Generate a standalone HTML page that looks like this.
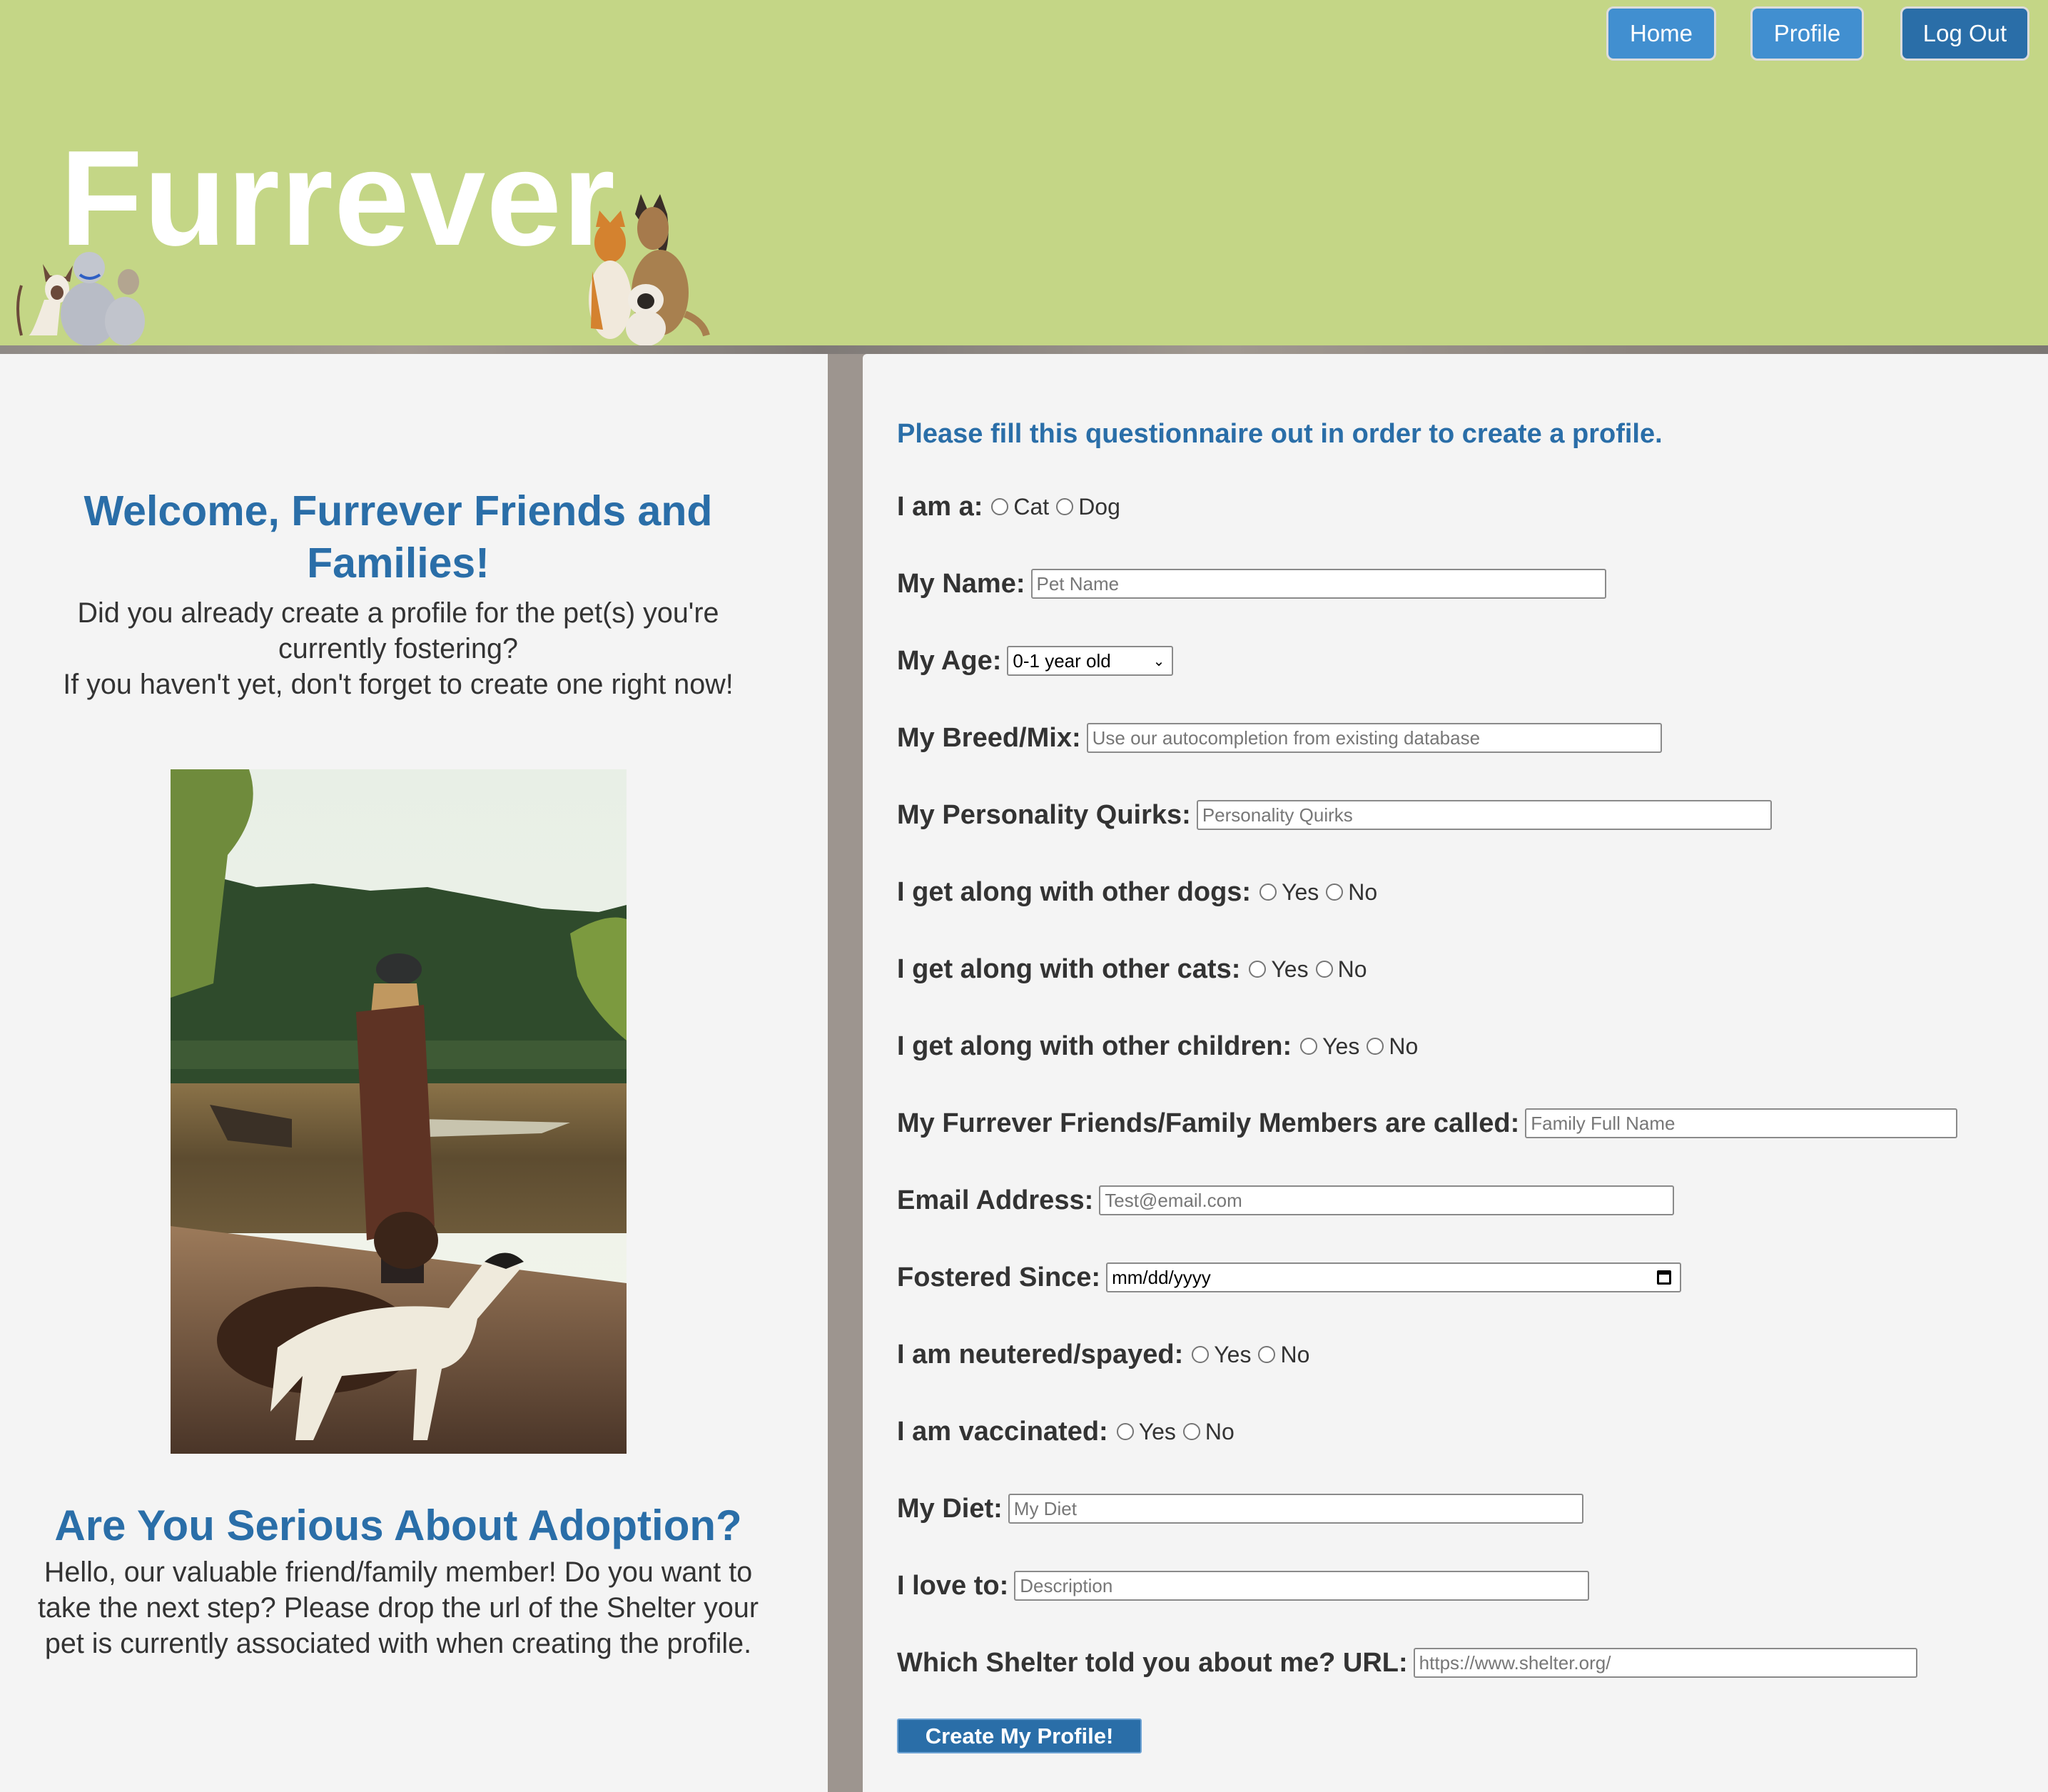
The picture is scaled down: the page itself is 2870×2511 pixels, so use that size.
<!DOCTYPE html>
<html><head><meta charset="utf-8"><style>
*{margin:0;padding:0;box-sizing:border-box}
body{width:2870px;height:2511px;position:relative;overflow:hidden;background:#9d958f;font-family:"Liberation Sans",Arial,sans-serif}
.hdr{position:absolute;left:0;top:0;width:2870px;height:484px;background:#c4d686}
.strip{position:absolute;left:0;top:484px;width:2870px;height:12px;background:linear-gradient(90deg,#8f8a86,#a39a92 20%,#7f7a77 40%,#a09890 60%,#8c847e 80%,#7b7774)}
.btn{position:absolute;top:9px;height:76px;border:3px solid #dcdcdc;border-radius:10px;color:#fff;font-size:33px;display:flex;align-items:center;justify-content:center}
.title{position:absolute;left:84px;top:168px;font-size:190px;font-weight:bold;color:#fff;letter-spacing:1px;line-height:220px}
.lp{position:absolute;left:0;top:496px;width:1160px;height:2015px;background:#f4f4f4}
.rp{position:absolute;left:1209px;top:496px;width:1661px;height:2015px;background:#f4f4f4;border-top-left-radius:6px}
.c{position:absolute;left:0;width:1116px;text-align:center}
h2{color:#2a6ea8;font-weight:600}
.p{color:#333;line-height:50px}
.row{position:absolute;left:1257px;height:60px;display:flex;align-items:center;font-size:38px;color:#333;white-space:nowrap}
.row b{font-weight:bold;margin-right:8px}
.inp{height:42px;border:2px solid #8a8a8a;border-radius:3px;background:#fff;font-size:26px;color:#777;padding-left:6px;display:flex;align-items:center}
.rad{display:inline-block;width:24px;height:24px;border:2px solid #767676;border-radius:50%;background:#fff;margin:0 7px 0 4px}
.opt{font-size:32px;color:#333;margin-right:6px}
</style></head><body>
<div class="hdr"></div>
<div class="strip"></div>
<div class="btn" style="left:2251px;width:154px;background:#418fd0">Home</div>
<div class="btn" style="left:2453px;width:159px;background:#418fd0">Profile</div>
<div class="btn" style="left:2663px;width:181px;background:#2a6ea8">Log Out</div>
<div class="title">Furrever</div>
<svg style="position:absolute;left:0;top:270px" width="1100" height="214" viewBox="0 270 1100 214">
<path d="M60 370 L64 395 L80 390 L98 395 L102 372 L92 388 L70 386Z" fill="#6b4a3a"/>
<ellipse cx="80" cy="405" rx="17" ry="20" fill="#f2ece2"/>
<ellipse cx="80" cy="410" rx="9" ry="10" fill="#6b4a3a"/>
<path d="M62 420 Q45 470 40 470 L80 470 L85 420Z" fill="#f1ebe0"/>
<path d="M30 400 Q20 430 30 470" stroke="#6b4a3a" stroke-width="4" fill="none"/>
<ellipse cx="125" cy="440" rx="40" ry="45" fill="#b8bcc6"/>
<ellipse cx="125" cy="375" rx="22" ry="22" fill="#c2c6cf"/>
<path d="M112 385 Q125 395 140 385" stroke="#2e5fc4" stroke-width="4" fill="none"/>
<ellipse cx="180" cy="395" rx="15" ry="18" fill="#b3a590"/>
<ellipse cx="175" cy="450" rx="28" ry="34" fill="#c1c4cc"/>
<ellipse cx="855" cy="340" rx="22" ry="28" fill="#d4822f"/>
<path d="M835 318 L840 295 L855 312 L870 295 L876 318Z" fill="#d4822f"/>
<ellipse cx="855" cy="420" rx="30" ry="55" fill="#f1e9dc"/>
<path d="M830 380 L828 460 L845 462 Z" fill="#d4822f"/>
<path d="M890 300 L898 272 L910 300 L925 272 L935 300 Q940 340 930 360Z" fill="#3a2e28"/>
<ellipse cx="915" cy="320" rx="22" ry="30" fill="#a67a4c"/>
<ellipse cx="925" cy="410" rx="40" ry="60" fill="#a8804f"/>
<path d="M960 440 Q985 450 990 470" stroke="#a8804f" stroke-width="10" fill="none"/>
<ellipse cx="905" cy="420" rx="25" ry="22" fill="#f0ebe2"/>
<ellipse cx="905" cy="422" rx="12" ry="11" fill="#2c2824"/>
<ellipse cx="905" cy="460" rx="28" ry="25" fill="#efe9df"/>
</svg>

<div class="lp"></div>
<div class="rp"></div>

<h2 class="c" style="top:680px;font-size:59px;line-height:73px">Welcome, Furrever Friends and<br>Families!</h2>
<div class="c p" style="top:834px;font-size:39.5px">Did you already create a profile for the pet(s) you're<br>currently fostering?<br>If you haven't yet, don't forget to create one right now!</div>

<svg style="position:absolute;left:239px;top:1078px" width="639" height="959" viewBox="0 0 639 959">
<defs>
<linearGradient id="sky" x1="0" y1="0" x2="0" y2="1"><stop offset="0" stop-color="#e8efe6"/><stop offset="1" stop-color="#f3f5ec"/></linearGradient>
<linearGradient id="wat" x1="0" y1="0" x2="0" y2="1"><stop offset="0" stop-color="#8a7248"/><stop offset="0.5" stop-color="#5d4c30"/><stop offset="1" stop-color="#6d5a3a"/></linearGradient>
<linearGradient id="gr" x1="0" y1="0" x2="0" y2="1"><stop offset="0" stop-color="#9c7a5a"/><stop offset="1" stop-color="#4a3528"/></linearGradient>
</defs>
<rect width="639" height="959" fill="url(#sky)"/>
<path d="M0 160 L60 150 L120 165 L200 160 L280 170 L360 165 L440 180 L520 195 L600 200 L639 190 L639 470 L0 470Z" fill="#2f4b2c"/>
<path d="M0 0 L110 0 Q130 60 80 120 L60 300 L0 320Z" fill="#6f8b3c"/>
<path d="M560 230 Q610 200 639 210 L639 380 Q590 340 570 290Z" fill="#7c9a3f"/>
<rect x="0" y="380" width="639" height="40" fill="#3e5a35"/>
<rect x="0" y="440" width="639" height="210" fill="url(#wat)"/>
<path d="M350 490 L560 495 L520 510 L360 515Z" fill="#c8c4ae"/>
<path d="M55 470 L170 490 L170 530 L80 520Z" fill="#3a3026"/>
<path d="M0 640 L639 720 L639 959 L0 959Z" fill="url(#gr)"/>
<ellipse cx="320" cy="280" rx="32" ry="22" fill="#2e3030"/>
<path d="M285 300 L345 300 L360 450 L270 460 Z" fill="#c09860"/>
<path d="M260 340 L355 330 L370 640 L275 660Z" fill="#5e3324"/>
<rect x="295" y="640" width="60" height="80" fill="#2a2220"/>
<ellipse cx="205" cy="800" rx="140" ry="75" fill="#3a2418"/>
<ellipse cx="330" cy="660" rx="45" ry="40" fill="#3b2519"/>
<path d="M150 810 Q250 740 390 755 L440 690 Q470 670 490 700 L430 770 Q420 830 380 840 L360 940 L340 940 L345 840 L240 850 L200 940 L175 940 L185 850 L140 900Z" fill="#efeadc"/>
<path d="M440 690 Q470 665 495 690 L470 700Z" fill="#1e1c1a"/>
</svg>

<h2 class="c" style="top:2100px;font-size:60px;line-height:76px">Are You Serious About Adoption?</h2>
<div class="c p" style="top:2178px;font-size:39.5px">Hello, our valuable friend/family member! Do you want to<br>take the next step? Please drop the url of the Shelter your<br>pet is currently associated with when creating the profile.</div>

<div class="row" style="top:578px;color:#2a6ea8;font-size:38px;font-weight:600">Please fill this questionnaire out in order to create a profile.</div>

<div class="row" style="top:680px"><b>I am a:</b><span class="rad"></span><span class="opt">Cat</span><span class="rad"></span><span class="opt">Dog</span></div>
<div class="row" style="top:788px"><b>My Name:</b><div class="inp" style="width:806px">Pet Name</div></div>
<div class="row" style="top:896px"><b>My Age:</b><div class="inp" style="width:233px;color:#000;justify-content:space-between;padding-right:10px">0-1 year old<span style="font-size:20px">&#8964;</span></div></div>
<div class="row" style="top:1004px"><b>My Breed/Mix:</b><div class="inp" style="width:806px">Use our autocompletion from existing database</div></div>
<div class="row" style="top:1112px"><b>My Personality Quirks:</b><div class="inp" style="width:806px">Personality Quirks</div></div>
<div class="row" style="top:1220px"><b>I get along with other dogs:</b><span class="rad"></span><span class="opt">Yes</span><span class="rad"></span><span class="opt">No</span></div>
<div class="row" style="top:1328px"><b>I get along with other cats:</b><span class="rad"></span><span class="opt">Yes</span><span class="rad"></span><span class="opt">No</span></div>
<div class="row" style="top:1436px"><b>I get along with other children:</b><span class="rad"></span><span class="opt">Yes</span><span class="rad"></span><span class="opt">No</span></div>
<div class="row" style="top:1544px"><b>My Furrever Friends/Family Members are called:</b><div class="inp" style="width:606px">Family Full Name</div></div>
<div class="row" style="top:1652px"><b>Email Address:</b><div class="inp" style="width:806px">Test@email.com</div></div>
<div class="row" style="top:1760px"><b>Fostered Since:</b><div class="inp" style="width:806px;color:#000;justify-content:space-between;padding-right:12px">mm/dd/yyyy<span style="display:inline-block;width:20px;height:20px;border:3px solid #000;border-top-width:6px;border-radius:2px"></span></div></div>
<div class="row" style="top:1868px"><b>I am neutered/spayed:</b><span class="rad"></span><span class="opt">Yes</span><span class="rad"></span><span class="opt">No</span></div>
<div class="row" style="top:1976px"><b>I am vaccinated:</b><span class="rad"></span><span class="opt">Yes</span><span class="rad"></span><span class="opt">No</span></div>
<div class="row" style="top:2084px"><b>My Diet:</b><div class="inp" style="width:806px">My Diet</div></div>
<div class="row" style="top:2192px"><b>I love to:</b><div class="inp" style="width:806px">Description</div></div>
<div class="row" style="top:2300px"><b>Which Shelter told you about me? URL:</b><div class="inp" style="width:706px">https://www.shelter.org/</div></div>

<div style="position:absolute;left:1257px;top:2408px;width:343px;height:49px;background:#2a6ea8;border:2px solid #6ea3d4;border-radius:3px;color:#fff;font-weight:bold;font-size:31px;display:flex;align-items:center;justify-content:center">Create My Profile!</div>
</body></html>
